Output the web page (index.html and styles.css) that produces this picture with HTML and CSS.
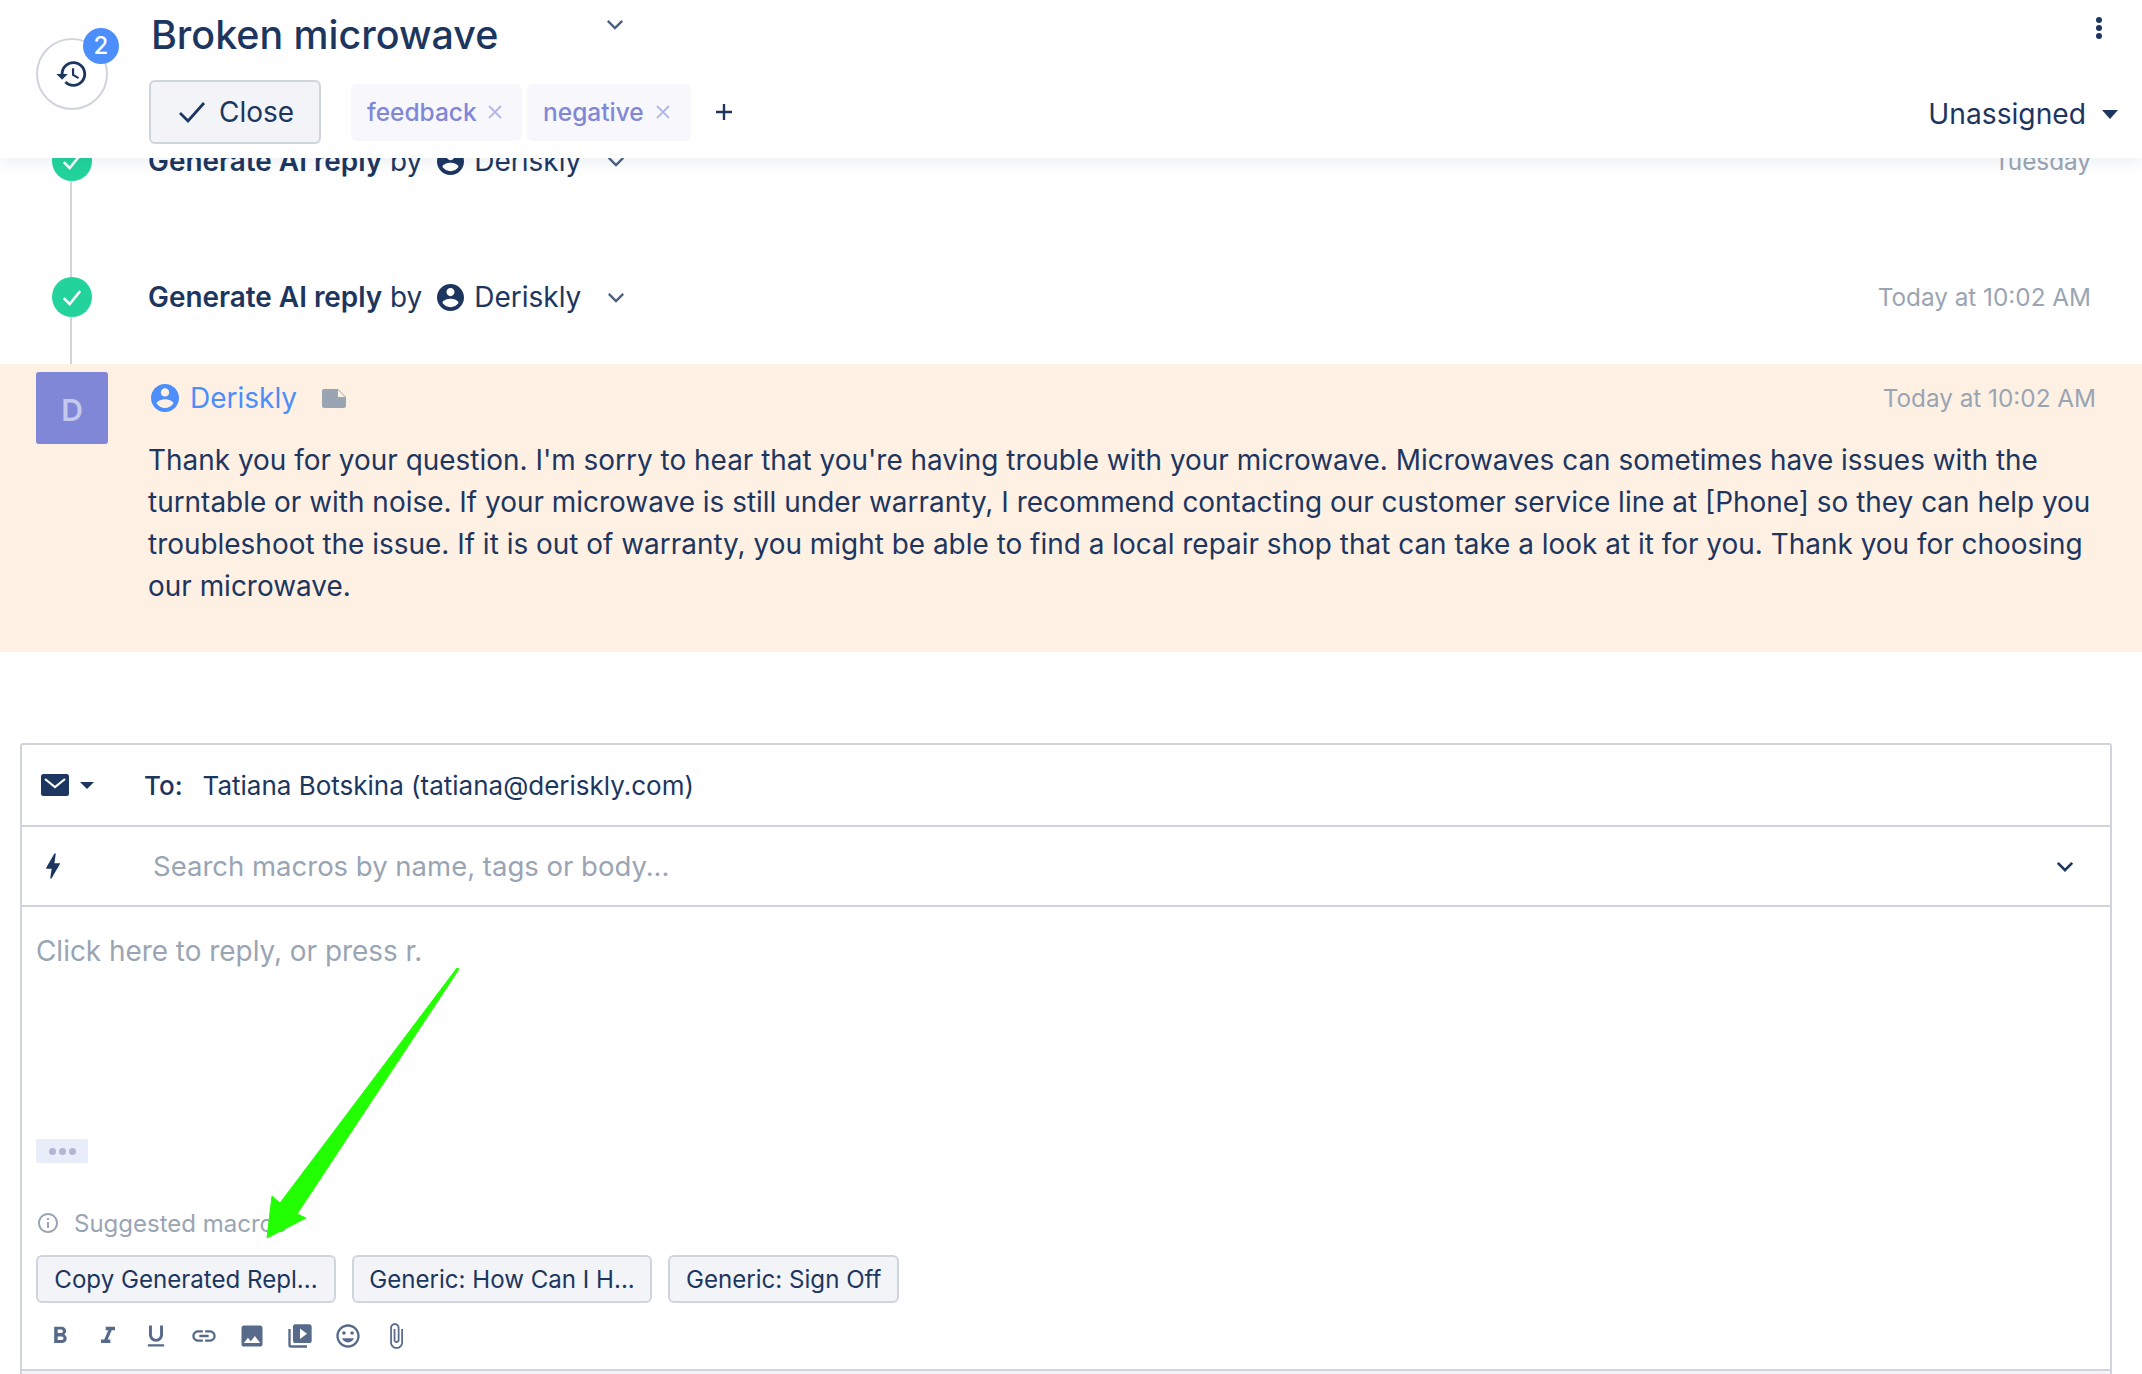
FILE: index.html
```html
<!DOCTYPE html>
<html lang="en">
<head>
<meta charset="utf-8">
<title>Broken microwave</title>
<link rel="stylesheet" href="styles.css">
</head>
<body>
<div class="page">
  <header class="header">
    <div class="hist-col">
      <div class="hist">
        <svg class="hist-icon" viewBox="0 0 24 24"><path d="M13 3c-4.97 0-9 4.03-9 9H1l3.89 3.89.07.14L9 12H6c0-3.87 3.13-7 7-7s7 3.13 7 7-3.13 7-7 7c-1.93 0-3.68-.79-4.94-2.06l-1.42 1.42C8.27 19.99 10.51 21 13 21c4.97 0 9-4.03 9-9s-4.03-9-9-9zm-1 5v5l4.28 2.54.72-1.21-3.5-2.08V8H12z"/></svg>
        <span class="badge">2</span>
      </div>
    </div>
    <div class="head-main">
      <div class="title-row">
        <h1 class="title">Broken microwave</h1>
        <svg class="chev title-chev" viewBox="0 0 20 12"><path d="M2 2l8 8 8-8"/></svg>
      </div>
      <div class="action-row">
        <button class="close-btn">
          <svg class="close-check" viewBox="0 0 28 24"><path d="M2 13l8 8L26 3"/></svg>
          Close
        </button>
        <span class="tag tag-first">feedback<svg class="tag-x" viewBox="0 0 14 14"><path d="M1 1l12 12M13 1L1 13"/></svg></span>
        <span class="tag">negative<svg class="tag-x" viewBox="0 0 14 14"><path d="M1 1l12 12M13 1L1 13"/></svg></span>
        <svg class="plus" viewBox="0 0 18 18"><path d="M9 1v16M1 9h16"/></svg>
      </div>
    </div>
    <div class="head-right">
      <svg class="kebab" viewBox="0 0 6 22"><circle cx="3" cy="3" r="3"/><circle cx="3" cy="11" r="3"/><circle cx="3" cy="19" r="3"/></svg>
      <div class="assignee">Unassigned<span class="caret caret-big"></span></div>
    </div>
  </header>

  <section class="feed">
    <div class="line"></div>
    <div class="event event-cut">
      <span class="ok"><svg viewBox="0 0 24 24"><path d="M5 13l5 5 9-11"/></svg></span>
      <span class="event-text"><b>Generate AI reply</b> by</span>
      <svg class="person" viewBox="2 2 20 20"><path d="M12 2C6.48 2 2 6.48 2 12s4.48 10 10 10 10-4.48 10-10S17.52 2 12 2zm0 3c1.66 0 3 1.34 3 3s-1.34 3-3 3-3-1.34-3-3 1.34-3 3-3zm0 14.2c-2.5 0-4.71-1.28-6-3.22.03-1.99 4-3.08 6-3.08 1.99 0 5.97 1.09 6 3.08-1.29 1.94-3.5 3.22-6 3.22z"/></svg>
      <span class="event-name">Deriskly</span>
      <svg class="chev" viewBox="0 0 20 12"><path d="M2 2l8 8 8-8"/></svg>
      <span class="time">Tuesday</span>
    </div>
    <div class="event">
      <span class="ok"><svg viewBox="0 0 24 24"><path d="M5 13l5 5 9-11"/></svg></span>
      <span class="event-text"><b>Generate AI reply</b> by</span>
      <svg class="person" viewBox="2 2 20 20"><path d="M12 2C6.48 2 2 6.48 2 12s4.48 10 10 10 10-4.48 10-10S17.52 2 12 2zm0 3c1.66 0 3 1.34 3 3s-1.34 3-3 3-3-1.34-3-3 1.34-3 3-3zm0 14.2c-2.5 0-4.71-1.28-6-3.22.03-1.99 4-3.08 6-3.08 1.99 0 5.97 1.09 6 3.08-1.29 1.94-3.5 3.22-6 3.22z"/></svg>
      <span class="event-name">Deriskly</span>
      <svg class="chev" viewBox="0 0 20 12"><path d="M2 2l8 8 8-8"/></svg>
      <span class="time">Today at 10:02 AM</span>
    </div>
  </section>

  <article class="message">
    <div class="avatar">D</div>
    <div class="msg-main">
      <div class="msg-head">
        <svg class="msg-person" viewBox="2 2 20 20"><path d="M12 2C6.48 2 2 6.48 2 12s4.48 10 10 10 10-4.48 10-10S17.52 2 12 2zm0 3c1.66 0 3 1.34 3 3s-1.34 3-3 3-3-1.34-3-3 1.34-3 3-3zm0 14.2c-2.5 0-4.71-1.28-6-3.22.03-1.99 4-3.08 6-3.08 1.99 0 5.97 1.09 6 3.08-1.29 1.94-3.5 3.22-6 3.22z"/></svg>
        <span class="msg-name">Deriskly</span>
        <svg class="note" viewBox="0 0 24 19"><path d="M2 0h14l8 8v9a2 2 0 0 1-2 2H2a2 2 0 0 1-2-2V2a2 2 0 0 1 2-2z"/><path class="note-fold" d="M16 1l7 7h-7z"/></svg>
        <span class="msg-time">Today at 10:02 AM</span>
      </div>
      <p class="msg-body">Thank you for your question. I'm sorry to hear that you're having trouble with your microwave. Microwaves can sometimes have issues with the turntable or with noise. If your microwave is still under warranty, I recommend contacting our customer service line at [Phone] so they can help you troubleshoot the issue. If it is out of warranty, you might be able to find a local repair shop that can take a look at it for you. Thank you for choosing our microwave.</p>
    </div>
  </article>

  <section class="composer">
    <div class="to-row">
      <svg class="mail" viewBox="0 0 28 22"><rect width="28" height="22" rx="2.5"/><path d="M4 5l10 8 10-8" class="mail-flap"/></svg>
      <span class="caret caret-small"></span>
      <span class="to-label">To:</span>
      <span class="to-value">Tatiana Botskina (tatiana@deriskly.com)</span>
    </div>
    <div class="macro-row">
      <svg class="bolt" viewBox="7 3 10 18"><path d="M11 21h-1l1-7H7.5c-.88 0-.33-.75-.31-.78C8.48 10.94 10.42 7.54 13.01 3h1l-1 7h3.51c.4 0 .62.19.4.66C12.97 17.55 11 21 11 21z"/></svg>
      <span class="macro-input">Search macros by name, tags or body...</span>
      <svg class="macro-chev" viewBox="0 0 20 12"><path d="M2 2l8 8 8-8"/></svg>
    </div>
    <div class="editor">
      <div class="reply-hint">Click here to reply, or press r.</div>
      <div class="more"><i></i><i></i><i></i></div>
      <div class="suggest">
        <svg class="info" viewBox="2 2 20 20"><path d="M11 7h2v2h-2zm0 4h2v6h-2zm1-9C6.48 2 2 6.48 2 12s4.48 10 10 10 10-4.48 10-10S17.52 2 12 2zm0 18c-4.41 0-8-3.59-8-8s3.59-8 8-8 8 3.59 8 8-3.59 8-8 8z"/></svg>
        Suggested macros
      </div>
      <div class="macros">
        <button class="macro macro-wide">Copy Generated Repl...</button>
        <button class="macro macro-wide">Generic: How Can I H...</button>
        <button class="macro">Generic: Sign Off</button>
      </div>
      <div class="tools">
        <span class="tool"><svg viewBox="0 0 24 24"><path d="M15.6 10.79c.97-.67 1.65-1.77 1.65-2.79 0-2.26-1.75-4-4-4H7v14h7.04c2.09 0 3.71-1.7 3.71-3.79 0-1.52-.86-2.82-2.15-3.42zM10 6.5h3c.83 0 1.5.67 1.5 1.5s-.67 1.5-1.5 1.5h-3v-3zm3.5 9H10v-3h3.5c.83 0 1.5.67 1.5 1.5s-.67 1.5-1.5 1.5z"/></svg></span>
        <span class="tool"><svg viewBox="0 0 24 24"><path d="M10 4v3h2.21l-3.42 8H6v3h8v-3h-2.21l3.42-8H18V4z"/></svg></span>
        <span class="tool"><svg viewBox="0 0 24 24"><path d="M12 17c3.31 0 6-2.69 6-6V3h-2.5v8c0 1.93-1.57 3.5-3.5 3.5S8.5 12.93 8.5 11V3H6v8c0 3.31 2.69 6 6 6zm-7 2v2h14v-2H5z"/></svg></span>
        <span class="tool"><svg viewBox="0 0 24 24"><path d="M3.9 12c0-1.71 1.39-3.1 3.1-3.1h4V7H7c-2.76 0-5 2.24-5 5s2.24 5 5 5h4v-1.9H7c-1.71 0-3.1-1.39-3.1-3.1zM8 13h8v-2H8v2zm9-6h-4v1.9h4c1.71 0 3.1 1.39 3.1 3.1s-1.39 3.1-3.1 3.1h-4V17h4c2.76 0 5-2.24 5-5s-2.24-5-5-5z"/></svg></span>
        <span class="tool"><svg viewBox="0 0 24 24"><path d="M21 19V5c0-1.1-.9-2-2-2H5c-1.1 0-2 .9-2 2v14c0 1.1.9 2 2 2h14c1.1 0 2-.9 2-2zM8.5 13.5l2.5 3.01L14.5 12l4.5 6H5l3.5-4.5z"/></svg></span>
        <span class="tool"><svg viewBox="0 0 24 24"><path d="M4 6H2v14c0 1.1.9 2 2 2h14v-2H4V6zm16-4H8c-1.1 0-2 .9-2 2v12c0 1.1.9 2 2 2h12c1.1 0 2-.9 2-2V4c0-1.1-.9-2-2-2zm-8 12.5v-9l6 4.5-6 4.5z"/></svg></span>
        <span class="tool"><svg viewBox="0 0 24 24"><path d="M11.99 2C6.47 2 2 6.48 2 12s4.47 10 9.99 10C17.52 22 22 17.52 22 12S17.52 2 11.99 2zM12 20c-4.42 0-8-3.58-8-8s3.58-8 8-8 8 3.58 8 8-3.58 8-8 8zm3.5-9c.83 0 1.5-.67 1.5-1.5S16.33 8 15.5 8 14 8.67 14 9.5s.67 1.5 1.5 1.5zm-7 0c.83 0 1.5-.67 1.5-1.5S9.33 8 8.5 8 7 8.67 7 9.5 7.67 11 8.5 11zm3.5 6.5c2.33 0 4.31-1.46 5.11-3.5H6.89c.8 2.04 2.78 3.5 5.11 3.5z"/></svg></span>
        <span class="tool"><svg viewBox="0 0 24 24"><path d="M16.5 6v11.5c0 2.21-1.79 4-4 4s-4-1.79-4-4V5c0-1.38 1.12-2.5 2.5-2.5s2.5 1.12 2.5 2.5v10.5c0 .55-.45 1-1 1s-1-.45-1-1V6H10v9.5c0 1.38 1.12 2.5 2.5 2.5s2.5-1.12 2.5-2.5V5c0-2.21-1.79-4-4-4S7 2.79 7 5v12.5c0 3.04 2.46 5.5 5.5 5.5s5.5-2.46 5.5-5.5V6h-1.5z"/></svg></span>
      </div>
    </div>
    <div class="composer-foot"></div>
  </section>

  <svg class="arrow" viewBox="0 0 2142 1374"><path d="M459 969L457 968L280 1203L272 1196L267 1238L306 1218L297 1214Z"/></svg>
</div>
</body>
</html>
```

FILE: styles.css
```css
* { box-sizing: border-box; }
html, body { margin: 0; padding: 0; background: #fff; }
body { font-family: Inter, "Liberation Sans", sans-serif; color: #1d3660; }
svg { display: block; flex: none; }
.page { position: relative; width: 2142px; height: 1374px; overflow: hidden; background: #fff; }

.header { position: relative; z-index: 2; display: flex; height: 158px; background: #fff; box-shadow: 0 6px 14px rgba(29, 54, 96, .07); }
.hist-col { width: 149px; flex: none; padding: 38px 0 0 36px; }
.hist { position: relative; display: flex; align-items: center; justify-content: center; width: 72px; height: 72px; border: 2px solid #d0d5dd; border-radius: 50%; }
.hist-icon { width: 34px; height: 34px; fill: #1d3660; }
.badge { position: absolute; left: 45px; top: -12px; width: 36px; height: 36px; border-radius: 50%; background: #4c8efc; color: #fff; font-size: 24px; font-weight: 500; line-height: 36px; text-align: center; }

.head-main { flex: 1; }
.title-row { display: flex; height: 80px; align-items: flex-start; }
.title { width: 455px; margin: 12px 0 0 2px; font-size: 39.4px; line-height: 46px; font-weight: 500; white-space: nowrap; }
.chev { width: 18px; height: 11px; fill: none; stroke: #4a5f80; stroke-width: 2.6; }
.title-chev { margin-top: 19px; }
.action-row { display: flex; align-items: center; height: 64px; }
.close-btn { display: flex; align-items: center; gap: 13px; width: 172px; height: 64px; padding: 0 0 0 27px; border: 2px solid #d0d5dd; border-radius: 6px; background: #f2f4f7; color: #1d3660; font: 400 28px Inter, sans-serif; }
.close-check { width: 28px; height: 24px; fill: none; stroke: #1d3660; stroke-width: 2.8; }
.tag { display: flex; align-items: center; width: 164px; height: 57px; margin-left: 5px; padding: 0 21px 0 16px; border-radius: 6px; background: #f7f7fc; color: #8187d7; font-size: 24.5px; font-weight: 500; }
.tag-first { width: 171px; margin-left: 30px; padding-right: 20px; }
.tag-x { width: 14px; height: 14px; margin-left: auto; fill: none; stroke: #b3b7e7; stroke-width: 1.8; }
.plus { width: 18px; height: 18px; margin-left: 24px; fill: none; stroke: #1d3660; stroke-width: 2.4; }

.head-right { position: relative; width: 230px; flex: none; }
.kebab { position: absolute; right: 40px; top: 17px; width: 6px; height: 22px; fill: #1d3660; }
.assignee { position: absolute; right: 24px; top: 95px; display: flex; align-items: center; gap: 16px; font-size: 28.2px; line-height: 38px; white-space: nowrap; }
.caret { display: block; width: 0; height: 0; border-style: solid; border-color: #1d3660 transparent transparent; }
.caret-big { border-width: 9px 8px 0; }
.caret-small { border-width: 7px 7px 0; margin-left: 11px; }

.feed { position: relative; height: 206px; overflow: hidden; }
.line { position: absolute; left: 70px; top: 0; bottom: 0; width: 2px; background: #d0d5dd; }
.event { position: relative; display: flex; align-items: center; height: 40px; margin-top: 96px; padding: 0 51px 0 52px; }
.event-cut { margin-top: -17px; }
.ok { display: flex; align-items: center; justify-content: center; width: 40px; height: 40px; margin-right: 56px; border-radius: 50%; background: #22d49b; }
.ok svg { width: 28px; height: 28px; fill: none; stroke: #fff; stroke-width: 2.2; }
.event-text { font-size: 27.9px; white-space: nowrap; }
.event-text b { font-weight: 600; }
.person { width: 27px; height: 27px; margin-left: 15px; fill: #1d3660; }
.event-name { margin-left: 10px; width: 133px; font-size: 28px; }
.time { margin-left: auto; color: #9aa5b4; font-size: 24.3px; line-height: 38px; }

.message { display: flex; height: 288px; padding: 8px 46px 0 36px; background: #fff0e4; }
.avatar { display: flex; align-items: center; justify-content: center; width: 72px; height: 72px; flex: none; padding-top: 3px; border-radius: 3px; background: #8187d7; color: #c6c9ee; font-size: 30px; font-weight: 600; }
.msg-main { flex: 1; min-width: 0; margin-left: 40px; }
.msg-head { display: flex; align-items: center; height: 36px; margin-top: 8px; }
.msg-person { width: 28px; height: 28px; margin-left: 3px; fill: #4c8efc; }
.msg-name { margin-left: 11px; color: #4c8efc; font-size: 28px; }
.note { width: 24px; height: 19px; margin-left: 25px; fill: #9aa5b4; }
.note-fold { fill: #fff0e4; }
.msg-time { margin-left: auto; color: #9aa5b4; font-size: 24.3px; }
.msg-body { width: 1950px; margin: 23px 0 0; font-size: 27.95px; line-height: 42px; }

.composer { position: absolute; left: 20px; top: 743px; width: 2092px; height: 640px; border: 2px solid #d0d5dd; border-radius: 3px 3px 0 0; }
.to-row { display: flex; align-items: center; height: 82px; padding-left: 19px; border-bottom: 2px solid #d0d5dd; font-size: 26px; }
.mail { width: 28px; height: 22px; fill: #1d3660; }
.mail-flap { fill: none; stroke: #fff; stroke-width: 2.2; }
.to-label { margin-left: 50px; font-weight: 500; }
.to-value { margin-left: 20px; }
.macro-row { display: flex; align-items: center; height: 80px; padding: 0 36px 0 24px; border-bottom: 2px solid #d0d5dd; }
.bolt { width: 14px; height: 26px; fill: #1d3660; }
.macro-input { margin-left: 93px; color: #9aa5b4; font-size: 27.5px; }
.macro-chev { width: 18px; height: 11px; margin-left: auto; fill: none; stroke: #1d3660; stroke-width: 3; }

.editor { padding: 0 14px; }
.reply-hint { margin-top: 26px; color: #9aa5b4; font-size: 27.9px; line-height: 36px; }
.more { display: flex; align-items: center; justify-content: center; gap: 3px; width: 52px; height: 24px; margin-top: 170px; border-radius: 2px; background: #e8edf9; }
.more i { display: block; width: 7px; height: 7px; border-radius: 50%; background: #b3b5d3; }
.suggest { display: flex; align-items: center; gap: 16px; height: 32px; margin-top: 44px; color: #9aa5b4; font-size: 24px; white-space: nowrap; }
.info { width: 20px; height: 20px; margin-left: 2px; fill: #9aa5b4; }
.macros { display: flex; gap: 16px; margin-top: 16px; }
.macro { height: 48px; padding: 0 16px; border: 2px solid #d0d5dd; border-radius: 6px; background: #f2f4f7; color: #1d3660; font: 400 24.1px Inter, sans-serif; white-space: nowrap; }
.macro-wide { width: 300px; padding: 0; }
.tools { display: flex; height: 66px; align-items: center; }
.tool { display: flex; justify-content: center; width: 48px; }
.tool svg { width: 28px; height: 28px; fill: #576a8a; }
.composer-foot { position: absolute; left: 0; right: 0; top: 624px; height: 20px; border-top: 2px solid #d0d5dd; background: #f2f4f7; }

.arrow { position: absolute; left: 0; top: 0; z-index: 3; width: 2142px; height: 1374px; fill: #22ff00; stroke: #22ff00; stroke-width: 1; pointer-events: none; }
```
